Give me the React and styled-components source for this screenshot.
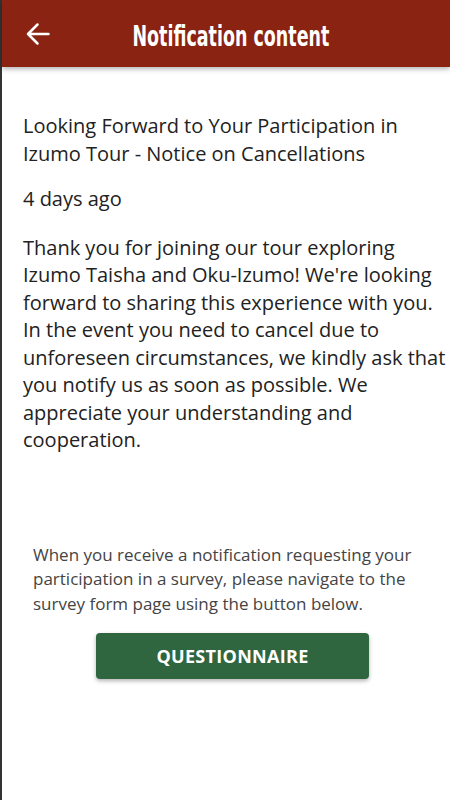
import React from "react";
import styled, { createGlobalStyle } from "styled-components";

const GlobalStyle = createGlobalStyle`
  html, body {
    margin: 0;
    padding: 0;
    background: #ffffff;
  }
  body {
    font-family: "Open Sans", "Noto Sans", sans-serif;
  }
`;

const Page = styled.div`
  min-height: 100vh;
  box-sizing: border-box;
  border-left: 2px solid #333;
  display: flex;
  flex-direction: column;
  background: #fff;
`;

const Header = styled.header`
  height: 67px;
  background-color: #8b2312;
  box-shadow: 0 2px 5px rgba(0, 0, 0, 0.3);
  display: flex;
  align-items: center;
`;

const BackButton = styled.button`
  border: none;
  background: none;
  padding: 0;
  margin-left: 24px;
  width: 24px;
  height: 24px;
  display: flex;
  align-items: center;
  justify-content: center;
  cursor: pointer;
`;

const Title = styled.h1`
  flex: 1;
  margin: 0;
  padding-right: 38px;
  text-align: center;
  white-space: nowrap;
`;

const TitleText = styled.span`
  display: inline-block;
  color: #fff;
  font-family: "DejaVu Sans Condensed", "DejaVu Sans", sans-serif;
  font-weight: 700;
  font-size: 29px;
  line-height: 1;
  transform: scaleX(0.67);
`;

const Content = styled.main`
  padding: 45px 4px 0 21px;
  color: #222;
`;

const Subject = styled.h2`
  margin: 0;
  font-size: 20px;
  font-weight: 400;
  line-height: 27.5px;
`;

const Time = styled.p`
  margin: 18px 0 0;
  font-size: 20px;
  line-height: 27.5px;
`;

const Body = styled.p`
  margin: 21px 0 0;
  font-size: 20px;
  line-height: 27.5px;
`;

const Footer = styled.section`
  margin-top: 89px;
  padding: 0 30px 0 31px;
  display: flex;
  flex-direction: column;
  align-items: center;
`;

const Hint = styled.p`
  align-self: stretch;
  margin: 0;
  color: #444;
  font-size: 17px;
  line-height: 24.5px;
`;

const ActionButton = styled.button`
  margin: 17px 0 0 12px;
  width: 273px;
  height: 46px;
  border: none;
  border-radius: 4px;
  background-color: #2f6640;
  color: #fff;
  font-family: "Open Sans", "Noto Sans", sans-serif;
  font-weight: 700;
  font-size: 18px;
  letter-spacing: 0.3px;
  box-shadow: 0 2px 4px rgba(0, 0, 0, 0.3);
  cursor: pointer;
`;

const ArrowIcon = () => (
  <svg width="24" height="24" viewBox="0 0 24 24" fill="none">
    <path
      d="M2 12H22.5M11.5 2.5L2 12l9.5 9.5"
      stroke="#fff"
      strokeWidth="2.5"
      strokeLinecap="round"
      strokeLinejoin="round"
    />
  </svg>
);

const App = () => {
  return (
    <Page>
      <GlobalStyle />
      <Header>
        <BackButton aria-label="back">
          <ArrowIcon />
        </BackButton>
        <Title>
          <TitleText>Notification content</TitleText>
        </Title>
      </Header>
      <Content>
        <Subject>
          Looking Forward to Your Participation in Izumo Tour - Notice on
          Cancellations
        </Subject>
        <Time>4 days ago</Time>
        <Body>
          Thank you for joining our tour exploring Izumo Taisha and Oku-Izumo!
          We're looking forward to sharing this experience with you. In the
          event you need to cancel due to unforeseen circumstances, we kindly
          ask that you notify us as soon as possible. We appreciate your
          understanding and cooperation.
        </Body>
      </Content>
      <Footer>
        <Hint>
          When you receive a notification requesting your participation in a
          survey, please navigate to the survey form page using the button
          below.
        </Hint>
        <ActionButton>QUESTIONNAIRE</ActionButton>
      </Footer>
    </Page>
  );
};

export default App;
